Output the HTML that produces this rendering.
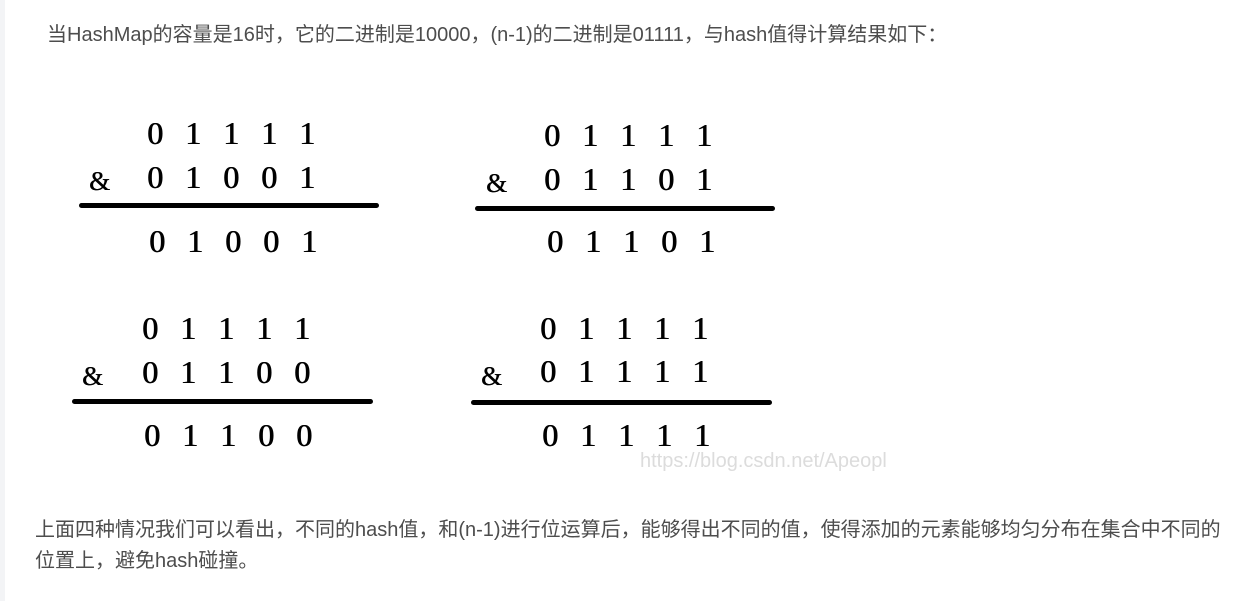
<!DOCTYPE html>
<html><head><meta charset="utf-8"><style>
body{margin:0;width:1252px;height:601px;background:#fff;position:relative;overflow:hidden;font-family:"Liberation Sans","Noto Sans CJK SC",sans-serif;}
.strip{position:absolute;left:0;top:0;width:5px;height:601px;background:#f3f4f6}
.t{position:absolute;color:#4d4d4d;font-size:20px;line-height:24px;white-space:nowrap}
.d{position:absolute;font-family:"Liberation Serif",serif;font-size:32px;color:#000;white-space:nowrap;line-height:1;text-shadow:0.7px 0 0 #000}
.d span{display:inline-block;width:38px}
.amp{position:absolute;font-family:"Liberation Serif",serif;font-size:27px;color:#000;line-height:1;text-shadow:0.5px 0 0 #000}
.ln{position:absolute;height:5px;background:#000;border-radius:3px}
.wm{position:absolute;left:640px;top:450px;color:#dcdcdc;font-size:20px;font-family:"Liberation Sans",sans-serif}
</style></head><body>
<div class="strip"></div>
<div class="t" style="left:47px;top:23px">当HashMap的容量是16时，它的二进制是10000，(n-1)的二进制是01111，与hash值得计算结果如下：</div>

<div class="d" style="left:147px;top:117px"><span>0</span><span>1</span><span>1</span><span>1</span><span>1</span></div>
<div class="d" style="left:147px;top:161px"><span>0</span><span>1</span><span>0</span><span>0</span><span>1</span></div>
<div class="amp" style="left:89px;top:168px">&amp;</div>
<div class="ln" style="left:79px;top:203px;width:300px"></div>
<div class="d" style="left:149px;top:225px"><span>0</span><span>1</span><span>0</span><span>0</span><span>1</span></div>

<div class="d" style="left:544px;top:119px"><span>0</span><span>1</span><span>1</span><span>1</span><span>1</span></div>
<div class="d" style="left:544px;top:163px"><span>0</span><span>1</span><span>1</span><span>0</span><span>1</span></div>
<div class="amp" style="left:486px;top:170px">&amp;</div>
<div class="ln" style="left:475px;top:206px;width:300px"></div>
<div class="d" style="left:547px;top:225px"><span>0</span><span>1</span><span>1</span><span>0</span><span>1</span></div>

<div class="d" style="left:142px;top:312px"><span>0</span><span>1</span><span>1</span><span>1</span><span>1</span></div>
<div class="d" style="left:142px;top:356px"><span>0</span><span>1</span><span>1</span><span>0</span><span>0</span></div>
<div class="amp" style="left:82px;top:363px">&amp;</div>
<div class="ln" style="left:72px;top:399px;width:301px"></div>
<div class="d" style="left:144px;top:419px"><span>0</span><span>1</span><span>1</span><span>0</span><span>0</span></div>

<div class="d" style="left:540px;top:312px"><span>0</span><span>1</span><span>1</span><span>1</span><span>1</span></div>
<div class="d" style="left:540px;top:355px"><span>0</span><span>1</span><span>1</span><span>1</span><span>1</span></div>
<div class="amp" style="left:481px;top:363px">&amp;</div>
<div class="ln" style="left:471px;top:400px;width:301px"></div>
<div class="d" style="left:542px;top:419px"><span>0</span><span>1</span><span>1</span><span>1</span><span>1</span></div>

<div class="wm">https://blog.csdn.net/Apeopl</div>

<div class="t" style="left:35px;top:518px">上面四种情况我们可以看出，不同的hash值，和(n-1)进行位运算后，能够得出不同的值，使得添加的元素能够均匀分布在集合中不同的</div>
<div class="t" style="left:35px;top:549px">位置上，避免hash碰撞。</div>
</body></html>
